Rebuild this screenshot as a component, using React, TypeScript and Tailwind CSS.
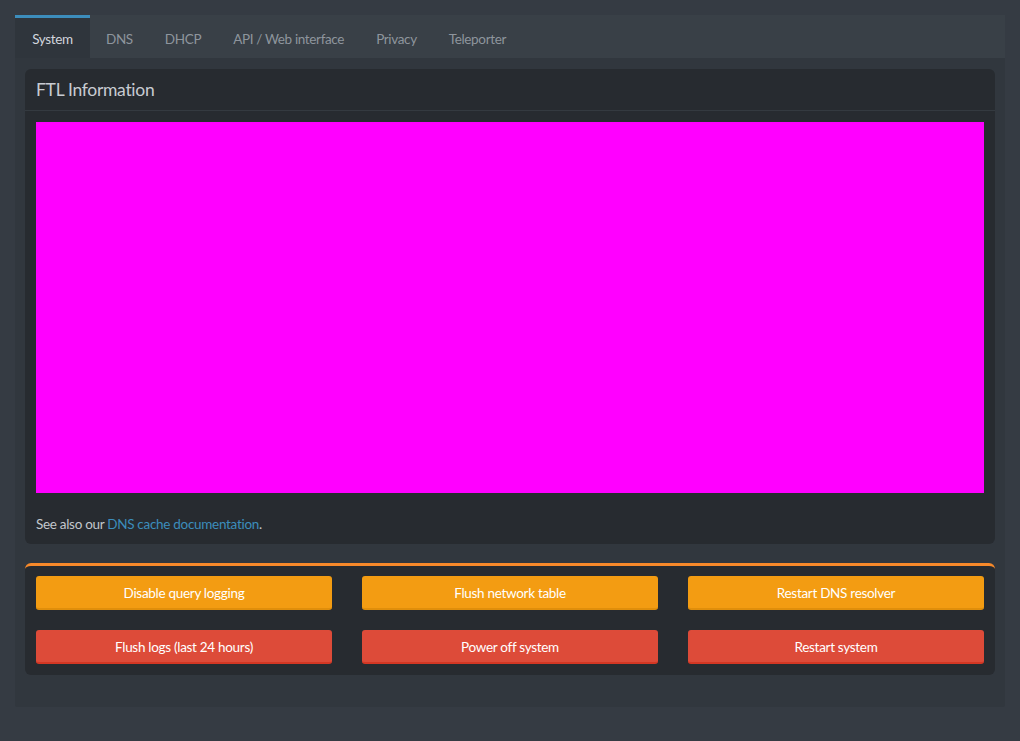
const tabs = ['System', 'DNS', 'DHCP', 'API / Web interface', 'Privacy', 'Teleporter']

const actions = [
  { label: 'Disable query logging', kind: 'warning' },
  { label: 'Flush network table', kind: 'warning' },
  { label: 'Restart DNS resolver', kind: 'warning' },
  { label: 'Flush logs (last 24 hours)', kind: 'danger' },
  { label: 'Power off system', kind: 'danger' },
  { label: 'Restart system', kind: 'danger' },
]

export default function App() {
  return (
    <div
      className="min-h-[741px] bg-[#353b43] pt-[15px] px-[15px] pb-[34px]"
      style={{ fontFamily: '"Source Sans Pro", Lato, "Noto Sans", sans-serif' }}
    >
      <div className="bg-[#31373e] rounded-[2px] pb-[32px]">
        {/* tab bar */}
        <div className="flex bg-[#394047] h-[43px]">
          {tabs.map((t, i) => (
            <div
              key={t}
              className={
                i === 0
                  ? 'flex items-center justify-center w-[75px] pt-[2px] bg-[#2f353c] border-t-[3px] border-[#3c8dbc] text-[13.5px] tracking-[-0.35px] text-[#d2d6de]'
                  : 'px-[16px] flex items-center pt-[5px] text-[13.5px] tracking-[-0.35px] text-[#8e959d]'
              }
            >
              {t}
            </div>
          ))}
        </div>

        <div className="px-[10px] pt-[11px]">
          {/* FTL card */}
          <div className="bg-[#272b30] rounded-[6px]">
            <div className="px-[11px] h-[42px] pt-[2px] flex items-center border-b border-[#343a40] text-[17.5px] tracking-[-0.3px] text-[#c8ccd2]">
              FTL Information
            </div>
            <div className="px-[11px] pt-[11px] pb-[10px]">
              <div className="bg-[#ff00ff] h-[371px]" />
              <p className="mt-[21px] text-[13.5px] tracking-[-0.3px] leading-[20px] text-[#c3c7cd]">
                See also our{' '}
                <a className="text-[#3c8dbc]" href="#">
                  DNS cache documentation
                </a>
                .
              </p>
            </div>
          </div>

          {/* actions card */}
          <div className="mt-[19px] bg-[#272b30] rounded-[6px] border-t-[3px] border-[#f7892a] px-[11px] pt-[10px] pb-[11px]">
            <div className="grid grid-cols-3 gap-x-[30px] gap-y-[20px]">
              {actions.map((a) => (
                <button
                  key={a.label}
                  className={
                    a.kind === 'warning'
                      ? 'h-[34px] pt-[3px] rounded-[3px] bg-[#f39c12] border-b-2 border-[#e08e0b] text-[13.5px] tracking-[-0.3px] text-white'
                      : 'h-[34px] pt-[3px] rounded-[3px] bg-[#dd4b39] border-b-2 border-[#d33724] text-[13.5px] tracking-[-0.3px] text-white'
                  }
                >
                  {a.label}
                </button>
              ))}
            </div>
          </div>
        </div>
      </div>
    </div>
  )
}
